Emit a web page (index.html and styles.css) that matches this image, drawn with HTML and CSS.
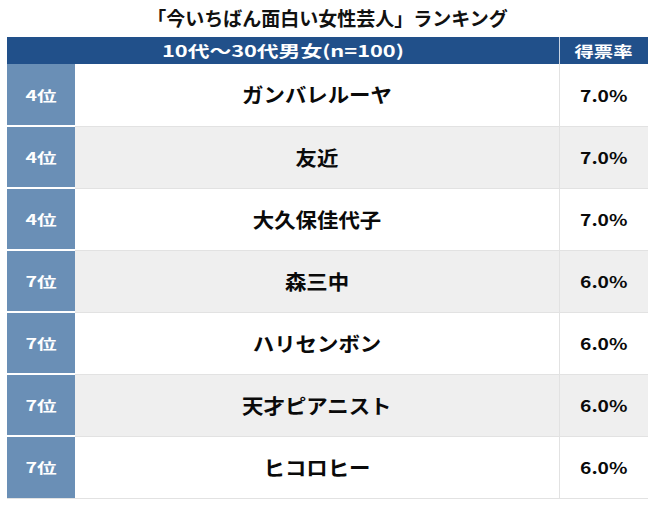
FILE: index.html
```html
<!DOCTYPE html>
<html lang="ja">
<head>
<meta charset="utf-8">
<link rel="stylesheet" href="styles.css">
</head>
<body>
<div class="wrap">
  <h1 class="title">「今いちばん面白い女性芸人」ランキング</h1>
  <table class="rank-table">
    <colgroup>
      <col class="c-rank">
      <col class="c-name">
      <col class="c-pct">
    </colgroup>
    <thead>
      <tr>
        <th class="h-main" colspan="2"><span class="sx-head">10代〜30代男女(n=100)</span></th>
        <th class="h-pct"><span class="sx-pcth">得票率</span></th>
      </tr>
    </thead>
    <tbody>
      <tr><td class="rank"><span class="sx-rank">4位</span></td><td class="name"><span class="sx-name">ガンバレルーヤ</span></td><td class="pct"><span class="sx-pct">7.0%</span></td></tr>
      <tr class="alt"><td class="rank"><span class="sx-rank">4位</span></td><td class="name"><span class="sx-name">友近</span></td><td class="pct"><span class="sx-pct">7.0%</span></td></tr>
      <tr><td class="rank"><span class="sx-rank">4位</span></td><td class="name"><span class="sx-name">大久保佳代子</span></td><td class="pct"><span class="sx-pct">7.0%</span></td></tr>
      <tr class="alt"><td class="rank"><span class="sx-rank">7位</span></td><td class="name"><span class="sx-name">森三中</span></td><td class="pct"><span class="sx-pct">6.0%</span></td></tr>
      <tr><td class="rank"><span class="sx-rank">7位</span></td><td class="name"><span class="sx-name">ハリセンボン</span></td><td class="pct"><span class="sx-pct">6.0%</span></td></tr>
      <tr class="alt"><td class="rank"><span class="sx-rank">7位</span></td><td class="name"><span class="sx-name">天才ピアニスト</span></td><td class="pct"><span class="sx-pct">6.0%</span></td></tr>
      <tr><td class="rank"><span class="sx-rank">7位</span></td><td class="name"><span class="sx-name">ヒコロヒー</span></td><td class="pct"><span class="sx-pct">6.0%</span></td></tr>
    </tbody>
  </table>
</div>
</body>
</html>
```

FILE: styles.css
```css
* { box-sizing: border-box; }
body {
  margin: 0;
  background: #ffffff;
  font-family: "Noto Sans CJK JP", "Noto Sans", sans-serif;
}
.wrap {
  width: 660px;
  padding: 0 12px 0 7px;
}
.title {
  margin: 0;
  height: 37px;
  line-height: 35px;
  font-size: 19px;
  font-weight: 700;
  text-align: center;
  color: #111;
}
.rank-table {
  width: 641px;
  border-collapse: collapse;
  table-layout: fixed;
}
.c-rank { width: 68px; }
.c-name { width: 484px; }
.c-pct { width: 89px; }
.rank-table th {
  background: #21508a;
  color: #fff;
  height: 27px;
  padding: 0;
  font-weight: 700;
  line-height: 27px;
}
.h-main {
  font-size: 16px;
  border-right: 1px solid #c9d4e2;
}
.h-pct {
  font-size: 15px;
}
.rank-table td {
  height: 62px;
  padding: 0;
  border-bottom: 1px solid #e2e2e2;
  text-align: center;
  font-weight: 700;
}
.rank {
  background: #6a8fb6;
  color: #fff;
  font-size: 14px;
  border-bottom: 2px solid #ffffff !important;
}
tbody tr:last-child .rank { border-bottom: 1px solid #e2e2e2 !important; }
.name {
  font-size: 20px;
  color: #0a0a0a;
  border-right: 1px solid #e2e2e2;
}
.pct {
  font-size: 16px;
  color: #0a0a0a;
}
.alt .name, .alt .pct { background: #efefef; }

.sx-head, .sx-pcth, .sx-rank, .sx-name, .sx-pct { display: inline-block; }
.sx-head { transform: scaleX(1.36); }
.sx-pcth { transform: scaleX(1.29); }
.sx-rank { transform: scaleX(1.4); }
.sx-name { transform: scaleX(1.07); }
.sx-pct { transform: scaleX(1.2); }
```
